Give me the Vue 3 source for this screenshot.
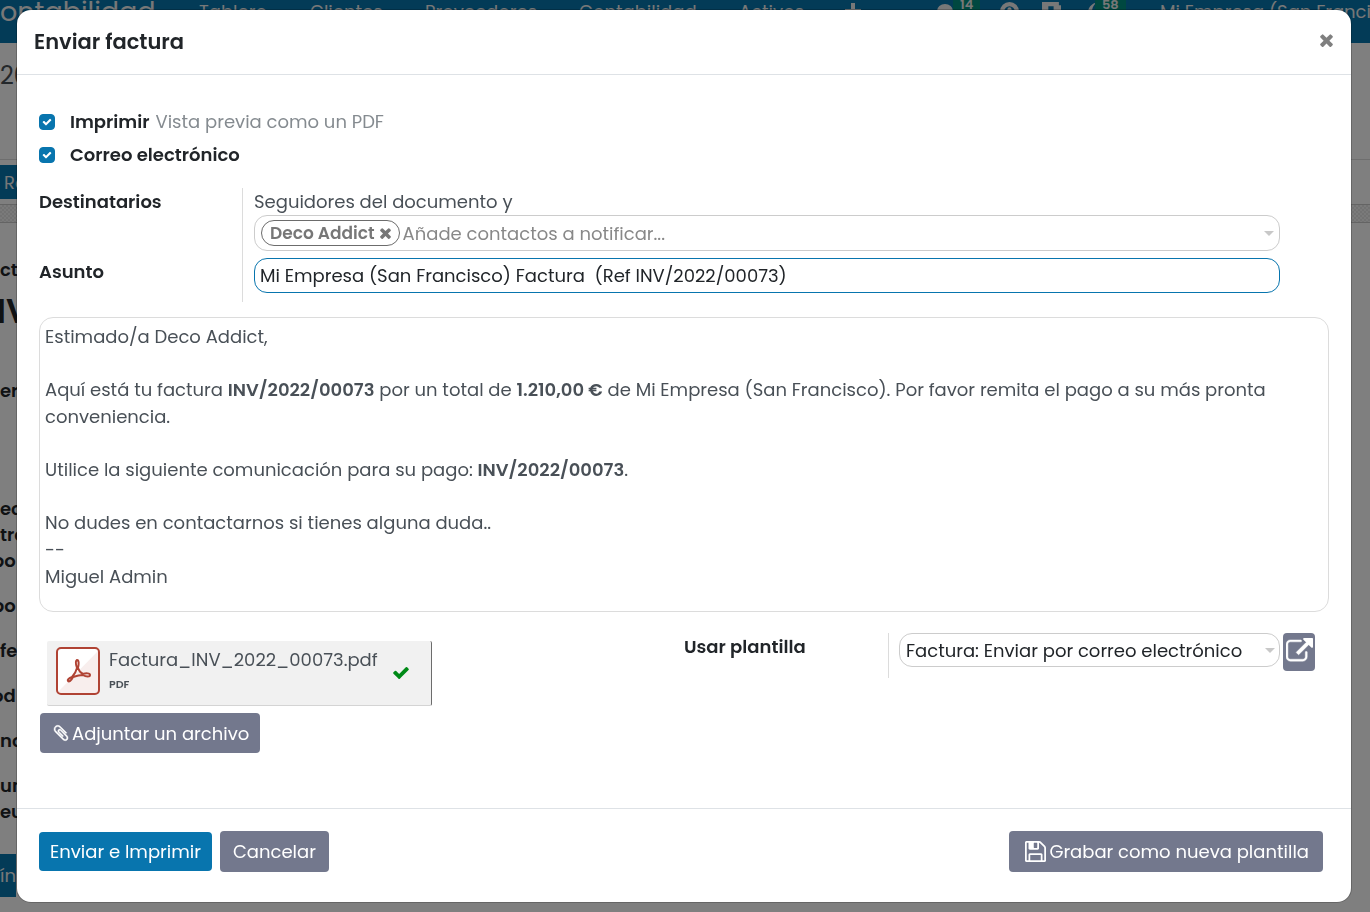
<script setup>
import { ref } from 'vue'

const printInvoice = ref(true)
const sendEmail = ref(true)
const subject = ref('Mi Empresa (San Francisco) Factura  (Ref INV/2022/00073)')
const newPartner = ref('')
const template = ref('invoice')

const menu = ['Tablero', 'Clientes', 'Proveedores', 'Contabilidad', 'Activos']
const sheetLabels = [
  { text: 'ctu', kind: 'first' },
  { text: 'NV', kind: 'big' },
  { text: 'er', kind: 'partner' },
  { text: 'ec', kind: 'delivery' },
  { text: 'tre', kind: 'tight' },
  { text: 'po', kind: 'tight cut' },
  { text: 'po', kind: 'row cut' },
  { text: 'fe', kind: 'row' },
  { text: 'od', kind: 'row cut' },
  { text: 'nc', kind: 'row' },
  { text: 'un', kind: 'row' },
  { text: 'eu', kind: 'tight' }
]

const icons = {
  times:
    'M1490 1322q0 40-28 68l-136 136q-28 28-68 28t-68-28l-294-294-294 294q-28 28-68 28t-68-28l-136-136q-28-28-28-68t28-68l294-294-294-294q-28-28-28-68t28-68l136-136q28-28 68-28t68 28l294 294 294-294q28-28 68-28t68 28l136 136q28 28 28 68t-28 68l-294 294 294 294q28 28 28 68z',
  check:
    'M1671 566q0 40-28 68l-724 724-136 136q-28 28-68 28t-68-28l-136-136-362-362q-28-28-28-68t28-68l136-136q28-28 68-28t68 28l294 295 656-657q28-28 68-28t68 28l136 136q28 28 28 68z',
  external:
    'M1408 928v320q0 119-84.5 203.5t-203.5 84.5h-832q-119 0-203.5-84.5t-84.5-203.5v-832q0-119 84.5-203.5t203.5-84.5h704q14 0 23 9t9 23v64q0 14-9 23t-23 9h-704q-66 0-113 47t-47 113v832q0 66 47 113t113 47h832q66 0 113-47t47-113v-320q0-14 9-23t23-9h64q14 0 23 9t9 23zm384-864v512q0 26-19 45t-45 19-45-19l-176-176-652 652q-10 10-23 10t-23-10l-114-114q-10-10-10-23t10-23l652-652-176-176q-19-19-19-45t19-45 45-19h512q26 0 45 19t19 45z',
  save:
    'M512 1536h768v-384h-768v384zm896 0h128v-896q0-14-10-38.5t-20-34.5l-281-281q-10-10-34-20t-39-10v416q0 40-28 68t-68 28h-576q-40 0-68-28t-28-68v-416h-128v1280h128v-416q0-40 28-68t68-28h832q40 0 68 28t28 68v416zm-384-928v-320q0-13-9.5-22.5t-22.5-9.5h-192q-13 0-22.5 9.5t-9.5 22.5v320q0 13 9.5 22.5t22.5 9.5h192q13 0 22.5-9.5t9.5-22.5zm640 32v928q0 40-28 68t-68 28h-1344q-40 0-68-28t-28-68v-1344q0-40 28-68t68-28h928q40 0 88 20t76 48l280 280q28 28 48 76t20 88z',
  clip:
    'M1596 1385q0 117-79 196t-196 79q-135 0-235-100l-777-776q-113-115-113-271 0-159 110-270t269-111q158 0 273 113l605 606q10 10 10 22 0 16-30.5 46.5t-46.5 30.5q-13 0-23-10l-606-607q-79-77-181-77-106 0-179 75t-73 181q0 105 76 181l776 777q63 63 145 63 64 0 106-42t42-106q0-82-63-145l-581-581q-26-24-60-24-29 0-48 19t-19 48q0 32 25 59l410 410q10 10 10 22 0 16-31 47t-47 31q-12 0-22-10l-410-410q-63-61-63-149 0-82 57-139t139-57q88 0 149 63l581 581q100 98 100 235z'
}
</script>

<template>
  <div class="app">
    <div class="page" aria-hidden="true">
      <nav class="topbar">
        <span class="brand">ontabilidad</span>
        <span v-for="item in menu" :key="item">{{ item }}</span>
        <svg class="nav-icon" viewBox="0 0 16 16"><path d="M6 0h4v6h6v4h-6v6H6v-6H0V6h6z" /></svg>
        <span class="with-badge">
          <svg class="nav-icon" viewBox="0 0 16 16"><ellipse cx="8" cy="8" rx="8" ry="7" /></svg>
          <b class="badge">14</b>
        </span>
        <svg class="nav-icon large" viewBox="0 0 18 18">
          <circle cx="9" cy="9" r="7" fill="none" stroke="#f0f0f0" stroke-width="4" />
          <circle cx="9" cy="7" r="2" />
        </svg>
        <svg class="nav-icon large" viewBox="0 0 18 18">
          <path d="M0 0h16v3h2v15H0zM6 4v8h5V4z" fill-rule="evenodd" />
        </svg>
        <span class="with-badge">
          <svg class="nav-icon half" viewBox="0 0 8 16"><path d="M8 0C2 2-1 9 3 14l5 2C4 12 4 5 8 1z" /></svg>
          <b class="badge">58</b>
        </span>
        <span>Mi Empresa (San Francisco)</span>
      </nav>
      <div class="crumb">20</div>
      <div class="statusbar"><span class="status-button">Re</span></div>
      <div class="sheet-edge"></div>
      <div class="sheet">
        <div v-for="(label, i) in sheetLabels" :key="i" class="sheet-label" :class="label.kind">{{ label.text }}</div>
        <span class="sheet-tab">ín</span>
      </div>
    </div>

    <div class="backdrop">
      <section class="modal" role="dialog" aria-modal="true" aria-labelledby="dialog-title">
        <header class="modal-header">
          <h1 id="dialog-title">Enviar factura</h1>
          <button class="close" type="button" aria-label="Cerrar">
            <svg viewBox="302 238 1188 1316"><path :d="icons.times" /></svg>
          </button>
        </header>

        <div class="modal-body">
          <div class="check-row">
            <span class="check">
              <input id="print" v-model="printInvoice" type="checkbox" />
              <svg viewBox="0 0 1792 1792"><path :d="icons.check" /></svg>
            </span>
            <label for="print">Imprimir</label>
            <span class="hint">Vista previa como un PDF</span>
          </div>
          <div class="check-row">
            <span class="check">
              <input id="email" v-model="sendEmail" type="checkbox" />
              <svg viewBox="0 0 1792 1792"><path :d="icons.check" /></svg>
            </span>
            <label for="email">Correo electrónico</label>
          </div>

          <div class="fields">
            <div class="field-labels">
              <label class="recipients-label" for="partners">Destinatarios</label>
              <label for="subject">Asunto</label>
            </div>
            <div class="field-inputs">
              <span>Seguidores del documento y</span>
              <div class="tags">
                <span class="tag">
                  Deco Addict
                  <button type="button" aria-label="Quitar Deco Addict">
                    <svg viewBox="302 238 1188 1316"><path :d="icons.times" /></svg>
                  </button>
                </span>
                <input id="partners" v-model="newPartner" type="text" placeholder="Añade contactos a notificar..." />
                <i class="caret"></i>
              </div>
              <input id="subject" v-model="subject" class="subject" type="text" />
            </div>
          </div>

          <div class="message" contenteditable="true" role="textbox" aria-multiline="true" aria-label="Mensaje" spellcheck="false">
            <p>Estimado/a Deco Addict,</p>
            <p>Aquí está tu factura <strong>INV/2022/00073</strong> por un total de <strong>1.210,00 €</strong> de Mi Empresa (San Francisco). Por favor remita el pago a su más pronta conveniencia.</p>
            <p>Utilice la siguiente comunicación para su pago: <strong>INV/2022/00073</strong>.</p>
            <p>No dudes en contactarnos si tienes alguna duda..<br />--<br />Miguel Admin</p>
          </div>

          <div class="bottom">
            <div class="attachments">
              <div class="file">
                <svg class="pdf" viewBox="0 0 44 48">
                  <rect x="1" y="1" width="42" height="46" rx="4" fill="#fff" />
                  <path d="M43 3v40q0 4-4 4H5q-2 0-3-2z" fill="#f8eeed" />
                  <rect x="1" y="1" width="42" height="46" rx="4" fill="none" stroke="#b04334" stroke-width="2" />
                  <path d="M21 13c-2 1-1 5 0 8-1 4-3 7-5 9-3 1-5 3-4 4s3 0 5-4c3-1 7-2 10-2 3 2 7 2 7 0s-4-2-7-1c-2-1-4-3-5-6 1-4 1-8-1-8z" fill="none" stroke="#b04334" stroke-width="2" stroke-linejoin="round" />
                </svg>
                <div class="file-text">
                  <a href="#">Factura_INV_2022_00073.pdf</a>
                  <small>PDF</small>
                </div>
                <svg class="done" viewBox="121 334 1550 1188"><path :d="icons.check" /></svg>
              </div>
              <button class="btn attach" type="button">
                <svg viewBox="0 0 1792 1792"><path :d="icons.clip" /></svg>
                Adjuntar un archivo
              </button>
            </div>
            <label class="template-label" for="template">Usar plantilla</label>
            <div class="template-field">
              <div class="select-wrap">
                <select id="template" v-model="template">
                  <option value="invoice">Factura: Enviar por correo electrónico</option>
                </select>
                <i class="caret"></i>
              </div>
              <button class="open" type="button" aria-label="Abrir plantilla">
                <svg viewBox="0 0 1792 1792"><path :d="icons.external" /></svg>
              </button>
            </div>
          </div>
        </div>

        <footer class="modal-footer">
          <button class="btn primary" type="button">Enviar e Imprimir</button>
          <button class="btn" type="button">Cancelar</button>
          <button class="btn save" type="button">
            <svg viewBox="128 128 1536 1536"><path :d="icons.save" /></svg>
            Grabar como nueva plantilla
          </button>
        </footer>
      </section>
    </div>
  </div>
</template>

<style>
body {
  overflow: hidden;
}
</style>

<style scoped>
.app,
.app * {
  box-sizing: border-box;
}
.app {
  height: 100vh;
  overflow: hidden;
  font-family: Poppins, Inter, "Liberation Sans", sans-serif;
  font-size: 18px;
  line-height: 27px;
  color: #495057;
}
button,
input,
select {
  font: inherit;
  margin: 0;
}
button {
  cursor: pointer;
}
svg {
  display: block;
  fill: currentColor;
}

/* page behind the dialog */
.page {
  height: 100%;
  background: #fff;
}
.topbar {
  display: grid;
  grid-template-columns: 199px 111px 115px 154px 160px 106px 92px 63px 42px 45px 73px 1fr;
  height: 43px;
  background: #0676ae;
  color: #f0f0f0;
  line-height: 24px;
  white-space: nowrap;
  overflow: hidden;
}
.brand {
  font-size: 27px;
}
.nav-icon {
  width: 16px;
  height: 16px;
  margin-top: 3px;
}
.nav-icon.large {
  width: 19px;
  height: 19px;
  margin-top: 2px;
}
.nav-icon.half {
  width: 8px;
}
.with-badge {
  display: flex;
}
.badge {
  height: 14px;
  padding: 0 7px;
  background: #009080;
  font-size: 13px;
  line-height: 10px;
  font-weight: 600;
}
.crumb {
  height: 116px;
  padding-top: 19px;
  font-size: 24px;
  line-height: 28px;
}
.statusbar {
  height: 45px;
  padding-top: 5px;
  border-top: 1px solid #dcdcdc;
}
.status-button {
  display: inline-block;
  height: 34px;
  padding: 4px;
  background: #0676ae;
  color: #f0f0f0;
}
.sheet-edge {
  height: 19px;
  border: solid #c8c8c8;
  border-width: 1px 0;
  background: repeating-conic-gradient(#e4e4e4 0 25%, #f4f4f4 0 50%) 0 0 / 4px 4px;
}
.sheet {
  padding-top: 34px;
  overflow: hidden;
}
.sheet-label {
  height: 26px;
  line-height: 26px;
  font-weight: 600;
  color: #212529;
}
.sheet-label.big {
  height: 48px;
  margin-top: 4px;
  font-size: 34px;
  line-height: 48px;
  text-indent: -19px;
}
.sheet-label.partner {
  margin-top: 43px;
}
.sheet-label.delivery {
  margin-top: 92px;
}
.sheet-label.row {
  margin-top: 19px;
}
.sheet-label.cut {
  text-indent: -8px;
}
.sheet-tab {
  display: inline-block;
  height: 43px;
  margin-top: 29px;
  background: #0676ae;
  color: #f0f0f0;
  line-height: 43px;
}

/* dialog */
.backdrop {
  position: fixed;
  inset: 0;
  padding: 10px 19px 10px 17px;
  background: rgba(0, 0, 0, 0.5);
}
.modal {
  display: flex;
  flex-direction: column;
  min-height: 100%;
  border-radius: 14px;
  background: #fff;
  box-shadow: 0 0 0 1px rgba(0, 0, 0, 0.2);
}
.modal-header {
  display: flex;
  align-items: flex-start;
  justify-content: space-between;
  height: 65px;
  padding: 16px 17px;
  border-bottom: 1px solid #dee2e6;
}
h1 {
  margin: 0;
  font-size: 21px;
  line-height: 32px;
  font-weight: 600;
  color: #212529;
}
.close {
  display: flex;
  align-items: center;
  height: 28px;
  padding: 0 1px;
  border: 0;
  background: none;
  color: #7f7f7f;
}
.close svg {
  width: 13px;
  height: 14px;
}
.modal-body {
  flex: 1;
  padding: 30px 22px 0;
}
.check-row {
  display: flex;
  align-items: center;
  height: 33px;
}
.check {
  position: relative;
  width: 16px;
  height: 16px;
  margin-right: 15px;
}
.check input {
  display: block;
  width: 16px;
  height: 16px;
  appearance: none;
  border-radius: 4px;
  border: 1px solid #0875ae;
}
.check input:checked {
  background: #0875ae;
}
.check svg {
  position: absolute;
  inset: 3px;
  width: 10px;
  height: 10px;
  color: #fff;
  pointer-events: none;
}
label {
  font-weight: 600;
  color: #212529;
}
.hint {
  margin-left: 6px;
  color: #858b90;
}
.fields {
  display: grid;
  grid-template-columns: 203px 1fr;
  margin: 17px 49px 0 0;
}
.field-labels {
  display: flex;
  flex-direction: column;
}
.recipients-label {
  height: 70px;
}
.field-inputs {
  display: flex;
  flex-direction: column;
  padding: 0 0 9px 11px;
  border-left: 1px solid #dcdcdc;
}
.tags {
  display: flex;
  align-items: center;
  gap: 3px;
  height: 36px;
  padding: 0 5px 0 6px;
  border: 1px solid #ccc;
  border-radius: 13px;
}
.tag {
  display: flex;
  align-items: center;
  gap: 5px;
  height: 26px;
  padding: 0 8px;
  border: 1px solid #6c6c6c;
  border-radius: 13px;
  font-size: 17px;
  line-height: 24px;
  font-weight: 600;
  color: #777;
  white-space: nowrap;
}
.tag button {
  padding: 0;
  border: 0;
  background: none;
  color: inherit;
}
.tag svg {
  width: 11px;
  height: 12px;
}
.tags input {
  flex: 1;
  min-width: 0;
  padding: 0;
  border: 0;
  outline: 0;
  background: none;
}
.tags input::placeholder {
  color: #888;
}
.caret {
  border: solid transparent;
  border-width: 5px 5px 0;
  border-top-color: #c8c8c8;
}
.subject {
  width: 100%;
  height: 35px;
  margin-top: 7px;
  padding: 0 5px;
  border: 1px solid #0875ae;
  border-radius: 13px;
  outline: 0;
  color: #212529;
}
.message {
  display: flex;
  flex-direction: column;
  gap: 26px;
  min-height: 295px;
  margin-top: 15px;
  padding: 5px;
  border: 1px solid #dcdcdc;
  border-radius: 14px;
}
.message p {
  margin: 0;
}
.message strong {
  font-weight: 600;
}
.bottom {
  display: grid;
  grid-template-columns: 645px 204px 1fr;
  margin-top: 21px;
}
.file {
  display: flex;
  width: 385px;
  height: 65px;
  margin: 8px 0 0 8px;
  padding: 6px 9px;
  border-right: 1px solid #6c6c6c;
  border-bottom: 1px solid #d4d4d4;
  border-radius: 2px;
  background: #f1f1f1;
}
.pdf {
  width: 44px;
  height: 48px;
}
.file-text {
  display: flex;
  flex-direction: column;
  width: 274px;
  margin-left: 9px;
}
.file-text a {
  color: inherit;
  text-decoration: none;
  line-height: 26px;
  white-space: nowrap;
}
.file-text small {
  font-size: 11px;
  line-height: 22px;
  font-weight: 600;
}
.done {
  width: 16px;
  height: 12px;
  margin: 20px 0 0 10px;
  color: #008a17;
}
.btn {
  display: flex;
  align-items: center;
  height: 41px;
  padding: 0 13px;
  border: 0;
  border-radius: 4px;
  background: #73788d;
  color: #fff;
  white-space: nowrap;
}
.attach {
  height: 40px;
  margin: 7px 0 0 1px;
  padding: 0 11px 0 12px;
}
.attach svg {
  width: 18px;
  height: 18px;
  margin-right: 2px;
  stroke: currentColor;
  stroke-width: 40;
}
.template-field {
  display: flex;
  align-self: start;
  height: 45px;
  padding: 0 14px 0 10px;
  border-left: 1px solid #dcdcdc;
}
.select-wrap {
  position: relative;
  flex: 1;
}
.select-wrap .caret {
  position: absolute;
  top: 15px;
  right: 5px;
  pointer-events: none;
}
select {
  display: block;
  width: 100%;
  height: 34px;
  padding: 0 6px;
  appearance: none;
  border: 1px solid #ccc;
  border-radius: 13px;
  background: #fff;
  color: #212529;
}
.open {
  width: 32px;
  height: 38px;
  margin-left: 3px;
  padding: 0 2px 2px 3px;
  border: 0;
  border-radius: 4px;
  background: #73788d;
  color: #fff;
}
.open svg {
  width: 27px;
  height: 27px;
  stroke: currentColor;
  stroke-width: 30;
}
.modal-footer {
  display: flex;
  align-items: center;
  gap: 8px;
  height: 94px;
  padding: 0 28px 8px 22px;
  border-top: 1px solid #dee2e6;
}
.primary {
  height: 39px;
  padding: 0 11px;
  background: #0875ae;
}
.save {
  margin-left: auto;
  padding: 0 14px 0 16px;
}
.save svg {
  width: 21px;
  height: 21px;
  margin-right: 3px;
}
</style>
